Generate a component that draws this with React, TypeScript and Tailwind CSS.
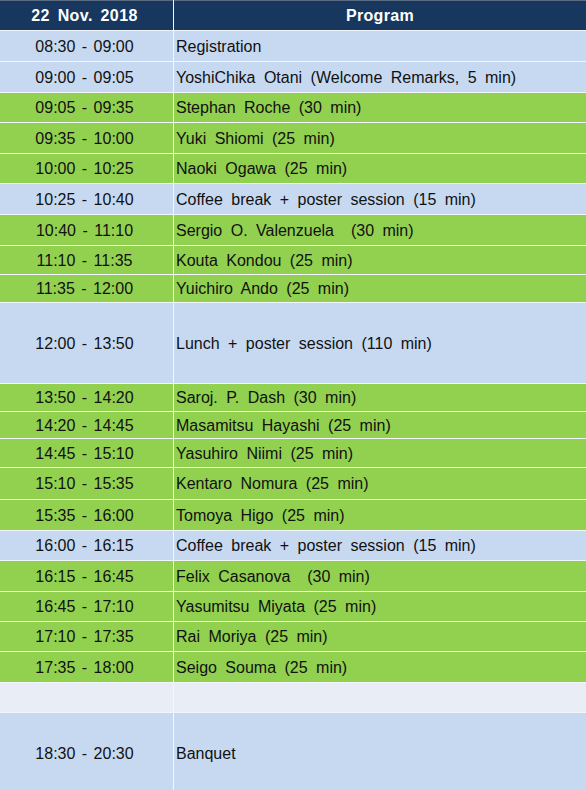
const green = "bg-[#92d050]";
const blue = "bg-[#c6d9f1]";
const pale = "bg-[#e9edf5]";

type Row = { time: string; title: string; h: string; bg: string };

const rows: Row[] = [
  { time: "08:30 - 09:00", title: "Registration", h: "h-[30px]", bg: blue },
  { time: "09:00 - 09:05", title: "YoshiChika Otani (Welcome Remarks, 5 min)", h: "h-[30px]", bg: blue },
  { time: "09:05 - 09:35", title: "Stephan Roche (30 min)", h: "h-[29px]", bg: green },
  { time: "09:35 - 10:00", title: "Yuki Shiomi (25 min)", h: "h-[30px]", bg: green },
  { time: "10:00 - 10:25", title: "Naoki Ogawa (25 min)", h: "h-[29px]", bg: green },
  { time: "10:25 - 10:40", title: "Coffee break + poster session (15 min)", h: "h-[30px]", bg: blue },
  { time: "10:40 - 11:10", title: "Sergio O. Valenzuela  (30 min)", h: "h-[30px]", bg: green },
  { time: "11:10 - 11:35", title: "Kouta Kondou (25 min)", h: "h-[28px]", bg: green },
  { time: "11:35 - 12:00", title: "Yuichiro Ando (25 min)", h: "h-[27px]", bg: green },
  { time: "12:00 - 13:50", title: "Lunch + poster session (110 min)", h: "h-[80px]", bg: blue },
  { time: "13:50 - 14:20", title: "Saroj. P. Dash (30 min)", h: "h-[27px]", bg: green },
  { time: "14:20 - 14:45", title: "Masamitsu Hayashi (25 min)", h: "h-[26px]", bg: green },
  { time: "14:45 - 15:10", title: "Yasuhiro Niimi (25 min)", h: "h-[28px]", bg: green },
  { time: "15:10 - 15:35", title: "Kentaro Nomura (25 min)", h: "h-[31px]", bg: green },
  { time: "15:35 - 16:00", title: "Tomoya Higo (25 min)", h: "h-[30px]", bg: green },
  { time: "16:00 - 16:15", title: "Coffee break + poster session (15 min)", h: "h-[29px]", bg: blue },
  { time: "16:15 - 16:45", title: "Felix Casanova  (30 min)", h: "h-[30px]", bg: green },
  { time: "16:45 - 17:10", title: "Yasumitsu Miyata (25 min)", h: "h-[29px]", bg: green },
  { time: "17:10 - 17:35", title: "Rai Moriya (25 min)", h: "h-[29px]", bg: green },
  { time: "17:35 - 18:00", title: "Seigo Souma (25 min)", h: "h-[30px]", bg: green },
  { time: "", title: "", h: "h-[29px]", bg: pale },
  { time: "18:30 - 20:30", title: "Banquet", h: "h-[80px]", bg: blue },
];

export default function App() {
  return (
    <div className="w-[586px] h-[790px] overflow-hidden bg-white font-['Liberation_Sans',Arial,sans-serif]">
      <div className="grid grid-cols-[173px_1fr] gap-px bg-[#f3f6fa] text-[16px] text-[#111]">
        <div className="h-[30px] bg-[#17375e] border-t border-[#5a6a80] flex items-center justify-center pr-1 text-white font-bold tracking-[0.4px] [word-spacing:3px]">
          22 Nov. 2018
        </div>
        <div className="h-[30px] bg-[#17375e] border-t border-[#5a6a80] flex items-center justify-center text-white font-bold tracking-[0.3px]">
          Program
        </div>
        {rows.map((r, i) => (
          <div key={i} className="contents">
            <div className={`${r.h} ${r.bg} flex items-center justify-center pr-1 pt-px whitespace-pre [word-spacing:2px]`}>
              {r.time}
            </div>
            <div className={`${r.h} ${r.bg} flex items-center pl-[2px] pt-px whitespace-pre [word-spacing:4px]`}>
              {r.title}
            </div>
          </div>
        ))}
      </div>
    </div>
  );
}
